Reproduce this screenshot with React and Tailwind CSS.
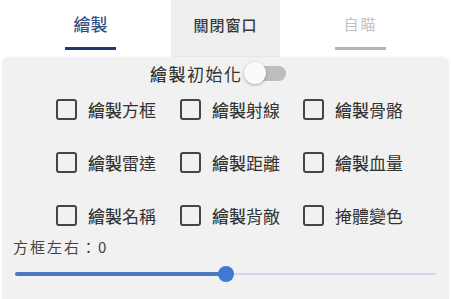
const options = [
  ["繪製方框", "繪製射線", "繪製骨骼"],
  ["繪製雷達", "繪製距離", "繪製血量"],
  ["繪製名稱", "繪製背敵", "掩體變色"],
];

export default function App() {
  return (
    <div
      className="flex h-[299px] w-[451px] flex-col overflow-hidden bg-white"
      style={{ fontFamily: '"Noto Sans CJK TC", "Noto Sans", sans-serif' }}
    >
      <Tabs />
      <div className="mx-[2px] flex flex-1 flex-col rounded-t-lg bg-[#f1f1f1] shadow-[0_-1px_2px_rgba(0,0,0,0.04)]">
        <div className="mt-[5px] flex h-[22px] items-center pl-[148px]">
          <span className="text-[17px] leading-none tracking-[1.5px] text-[#333]">
            <span className="font-medium">繪製</span>初始化
          </span>
          <Switch />
        </div>

        <div className="mt-[14px] grid grid-cols-[124px_123px_auto] gap-y-[31px] pl-[54px]">
          {options.flat().map((label) => (
            <CheckItem key={label} label={label} />
          ))}
        </div>

        <p className="mt-[12px] h-[18px] pl-[11px] text-[15px] leading-[18px] tracking-[2px] text-[#444]">
          方框左右：0
        </p>

        <Slider value={50} />
      </div>
    </div>
  );
}

function Tabs() {
  return (
    <div className="flex h-[57px] gap-[26px] px-[36px]">
      <div className="flex w-[109px] flex-col items-center">
        <span className="mt-[14px] text-[17px] font-medium leading-[20px] text-[#2f4f86]">繪製</span>
        <span className="mt-[13px] h-[3px] w-[51px] bg-[#1e3b72]" />
      </div>
      <div className="flex w-[109px] items-center justify-center bg-[#eeeeee] pb-[6px]">
        <span className="text-[15px] font-medium tracking-[1px] text-[#3a3a3a]">關閉窗口</span>
      </div>
      <div className="flex w-[109px] flex-col items-center">
        <span className="mt-[14px] text-[15px] leading-[20px] tracking-[2px] text-[#c2c2c2]">自瞄</span>
        <span className="mt-[13px] h-[3px] w-[51px] bg-[#b4b4b4]" />
      </div>
    </div>
  );
}

function Switch() {
  return (
    <div className="relative ml-[1px] h-[22px] w-[42px]">
      <span className="absolute left-[6px] top-[4px] h-[15px] w-[36px] rounded-full bg-[#bdbdbd]" />
      <span className="absolute left-0 top-0 size-[22px] rounded-full bg-[#fafafa] shadow-[0_1px_3px_rgba(0,0,0,0.3)]" />
    </div>
  );
}

function CheckItem({ label }) {
  return (
    <label className="flex h-[22px] items-center">
      <span className="size-[21px] rounded-[3px] border-[2.5px] border-[#454545]" />
      <span className="ml-[11px] text-[17px] leading-none text-[#333]">
        {label.startsWith("繪製") ? (
          <>
            <span className="font-medium">繪製</span>
            {label.slice(2)}
          </>
        ) : (
          label
        )}
      </span>
    </label>
  );
}

function Slider({ value }) {
  return (
    <div className="relative mx-[13px] mt-[10px] h-[16px]">
      <span className="absolute left-0 right-0 top-[7px] h-[2px] bg-[#cdd8e8]" />
      <span
        className="absolute left-0 top-[6px] h-[4px] rounded-full bg-[#4b78be]"
        style={{ width: `${value}%` }}
      />
      <span
        className="absolute top-0 size-[16px] -translate-x-1/2 rounded-full bg-[#3e79d6]"
        style={{ left: `${value}%` }}
      />
    </div>
  );
}
